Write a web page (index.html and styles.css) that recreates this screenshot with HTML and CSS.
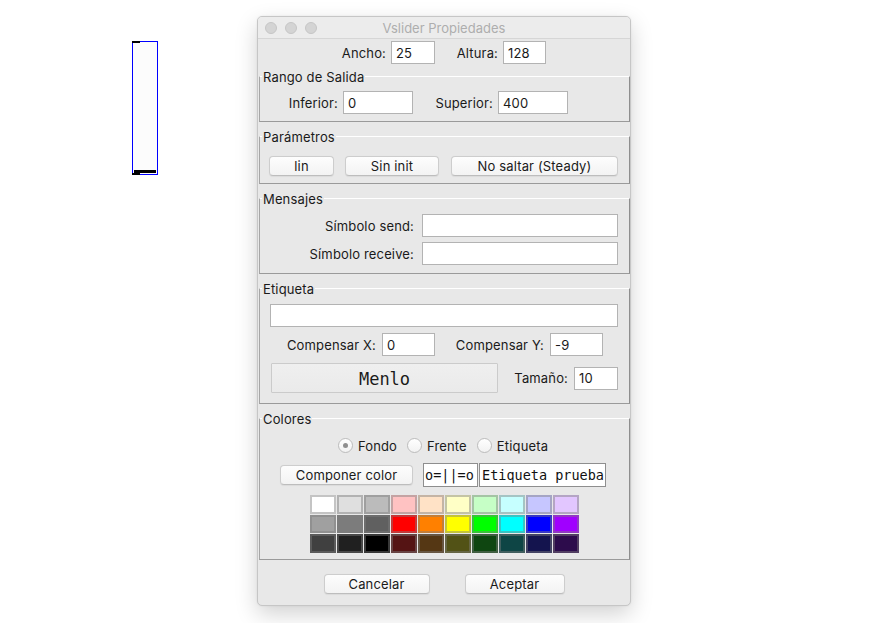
FILE: index.html
```html
<!DOCTYPE html>
<html lang="es">
<head>
<meta charset="utf-8">
<title>Vslider Propiedades</title>
<link rel="stylesheet" href="styles.css">
</head>
<body>
<main class="desktop">
  <div class="vslider">
    <span class="io io-in"></span>
    <span class="knob"></span>
    <span class="io io-out"></span>
  </div>

  <section class="window">
    <header class="titlebar">
      <div class="lights"><span class="light"></span><span class="light"></span><span class="light"></span></div>
      <div class="title">Vslider Propiedades</div>
      <div></div>
    </header>

    <div class="row row-size">
      <label class="lbl lbl-ancho">Ancho:</label>
      <input class="field f-ancho" type="text" value="25">
      <label class="lbl lbl-altura">Altura:</label>
      <input class="field f-altura" type="text" value="128">
    </div>

    <fieldset class="group g-rango">
      <legend>Rango de Salida</legend>
      <div class="row row-rango">
        <label class="lbl lbl-inferior">Inferior:</label>
        <input class="field f-rango" type="text" value="0">
        <label class="lbl lbl-superior">Superior:</label>
        <input class="field f-rango" type="text" value="400">
      </div>
    </fieldset>

    <fieldset class="group g-param">
      <legend>Parámetros</legend>
      <div class="row row-param">
        <button class="btn b-lin">lin</button>
        <button class="btn b-init">Sin init</button>
        <button class="btn b-steady">No saltar (Steady)</button>
      </div>
    </fieldset>

    <fieldset class="group g-msg">
      <legend>Mensajes</legend>
      <div class="row row-msg">
        <label class="lbl lbl-msg">Símbolo send:</label>
        <input class="field f-msg" type="text" value="">
      </div>
      <div class="row row-msg second">
        <label class="lbl lbl-msg">Símbolo receive:</label>
        <input class="field f-msg" type="text" value="">
      </div>
    </fieldset>

    <fieldset class="group g-label">
      <legend>Etiqueta</legend>
      <div class="row">
        <input class="field f-label" type="text" value="">
      </div>
      <div class="row row-offset">
        <label class="lbl lbl-offx">Compensar X:</label>
        <input class="field f-off" type="text" value="0">
        <label class="lbl lbl-offy">Compensar Y:</label>
        <input class="field f-off" type="text" value="-9">
      </div>
      <div class="row row-font">
        <button class="font-btn">Menlo</button>
        <label class="lbl lbl-size">Tamaño:</label>
        <input class="field f-size" type="text" value="10">
      </div>
    </fieldset>

    <fieldset class="group g-colors">
      <legend>Colores</legend>
      <div class="row row-radios">
        <span class="radio"><span class="dot on"><span class="pip"></span></span>Fondo</span>
        <span class="radio"><span class="dot"></span>Frente</span>
        <span class="radio"><span class="dot"></span>Etiqueta</span>
      </div>
      <div class="row row-compose">
        <button class="btn b-compose">Componer color</button>
        <span class="preview p-slider">o=||=o</span>
        <span class="preview p-label">Etiqueta prueba</span>
      </div>
      <div class="palette">
        <span class="swatch" style="--c:#ffffff"></span>
        <span class="swatch" style="--c:#dfdfdf"></span>
        <span class="swatch" style="--c:#bbbbbb"></span>
        <span class="swatch" style="--c:#ffc2c2"></span>
        <span class="swatch" style="--c:#ffe2c6"></span>
        <span class="swatch" style="--c:#ffffc6"></span>
        <span class="swatch" style="--c:#c6ffc6"></span>
        <span class="swatch" style="--c:#c6ffff"></span>
        <span class="swatch" style="--c:#c6c6ff"></span>
        <span class="swatch" style="--c:#e2c6ff"></span>

        <span class="swatch" style="--c:#a0a0a0"></span>
        <span class="swatch" style="--c:#7c7c7c"></span>
        <span class="swatch" style="--c:#606060"></span>
        <span class="swatch" style="--c:#ff0000"></span>
        <span class="swatch" style="--c:#ff8000"></span>
        <span class="swatch" style="--c:#ffff00"></span>
        <span class="swatch" style="--c:#00ff00"></span>
        <span class="swatch" style="--c:#00ffff"></span>
        <span class="swatch" style="--c:#0000ff"></span>
        <span class="swatch" style="--c:#a000ff"></span>

        <span class="swatch" style="--c:#404040"></span>
        <span class="swatch" style="--c:#202020"></span>
        <span class="swatch" style="--c:#000000"></span>
        <span class="swatch" style="--c:#551414"></span>
        <span class="swatch" style="--c:#553714"></span>
        <span class="swatch" style="--c:#525216"></span>
        <span class="swatch" style="--c:#0f4611"></span>
        <span class="swatch" style="--c:#0e4545"></span>
        <span class="swatch" style="--c:#14144e"></span>
        <span class="swatch" style="--c:#2d0c4c"></span>
      </div>
    </fieldset>

    <footer class="actions">
      <button class="btn b-cancel">Cancelar</button>
      <button class="btn b-ok">Aceptar</button>
    </footer>
  </section>
</main>
</body>
</html>
```

FILE: styles.css
```css
* { box-sizing: border-box; }
html, body { margin: 0; padding: 0; background: #ffffff; }
body {
  font-family: Inter, "Liberation Sans", sans-serif;
  font-size: 13px;
  letter-spacing: 0.15px;
  color: #1a1a1a;
}
.desktop { position: relative; width: 884px; height: 623px; overflow: hidden; }

/* Pd vslider object on the canvas */
.vslider {
  position: absolute;
  left: 132px;
  top: 41px;
  width: 26px;
  height: 134px;
  border: 1px solid #0000ff;
  background: #fcfcfc;
}
.io { position: absolute; left: -1px; width: 8px; height: 2px; background: #000; }
.io-in { top: -1px; }
.io-out { bottom: -1px; }
.knob { position: absolute; left: 1px; top: 128px; width: 22px; height: 3px; background: #000; }

/* dialog window */
.window {
  position: absolute;
  left: 257px;
  top: 16px;
  width: 374px;
  height: 590px;
  display: flex;
  flex-direction: column;
  background: #e8e8e8;
  border: 1px solid #c6c6c6;
  border-radius: 5px;
  box-shadow: 0 8px 22px rgba(0, 0, 0, 0.18), 0 0 2px rgba(0, 0, 0, 0.08);
  overflow: hidden;
}
.titlebar {
  flex: none;
  height: 22px;
  display: grid;
  grid-template-columns: 1fr auto 1fr;
  align-items: center;
  padding-top: 1px;
  background: #ececec;
  border-bottom: 1px solid #d6d6d6;
}
.lights { display: flex; gap: 8px; padding-left: 7px; }
.light {
  width: 12px;
  height: 12px;
  border-radius: 50%;
  background: #d4d4d4;
  border: 1px solid #c6c6c6;
}
.title { color: #aeaeae; font-size: 13px; letter-spacing: 0; }

.row { display: flex; align-items: center; }
.lbl { flex: none; text-align: right; white-space: nowrap; }
.field {
  flex: none;
  height: 23px;
  margin: 0;
  padding: 0 4px;
  border: 1px solid #b3b3b3;
  border-radius: 0;
  background: #ffffff;
  font: inherit;
  letter-spacing: inherit;
  color: #1a1a1a;
  outline: none;
}
.btn {
  flex: none;
  height: 20px;
  margin: 0;
  padding: 0;
  font: inherit;
  letter-spacing: inherit;
  color: #1a1a1a;
  background: linear-gradient(#fdfdfd, #f3f3f3);
  border: 1px solid #cdcdcd;
  border-bottom-color: #bdbdbd;
  border-radius: 4px;
  box-shadow: 0 0.5px 1px rgba(0, 0, 0, 0.06);
}

/* size row */
.row-size { margin-top: 2px; padding-left: 78px; }
.lbl-ancho { width: 50px; margin-right: 5px; }
.f-ancho { width: 44px; }
.lbl-altura { width: 43px; margin-left: 20px; margin-right: 5px; }
.f-altura { width: 43px; }

/* titled groups */
.group {
  min-width: 0;
  margin: 6px 0 0 1px;
  padding: 0;
  border: 1px solid #a6a6a6;
  border-top-color: #ffffff;
  border-right-color: #8e8e8e;
  border-bottom-color: #9a9a9a;
}
.group legend {
  margin-left: 2px;
  padding: 1px 1px 0;
  height: 16px;
  line-height: 16px;
  font-size: 13px;
  color: #1a1a1a;
}
.g-rango { margin-top: 4px; padding: 7px 0 7px; }
.g-param { padding: 12px 0 7px; }
.g-msg { padding: 8px 0 8px; }
.g-label { padding: 8px 0 10px; }
.g-colors { padding: 11px 0 6px; }

/* rango */
.row-rango { padding-left: 22px; }
.lbl-inferior { width: 56px; margin-right: 5px; }
.lbl-superior { width: 59px; margin-left: 21px; margin-right: 5px; }
.f-rango { width: 70px; }

/* parametros */
.row-param { padding-left: 9px; }
.b-lin { width: 65px; }
.b-init { width: 94px; margin-left: 11px; }
.b-steady { width: 167px; margin-left: 12px; }

/* mensajes */
.row-msg.second { margin-top: 5px; }
.lbl-msg { width: 154px; margin-right: 8px; }
.f-msg { width: 196px; }

/* etiqueta */
.f-label { width: 348px; margin-left: 10px; }
.row-offset { margin-top: 6px; padding-left: 20px; }
.lbl-offx { width: 96px; margin-right: 6px; }
.lbl-offy { width: 89px; margin-left: 20px; margin-right: 6px; }
.f-off { width: 53px; }
.row-font { margin-top: 7px; padding-left: 11px; }
.font-btn {
  flex: none;
  width: 227px;
  height: 30px;
  margin: 0;
  padding: 2px 0 0;
  background: linear-gradient(#efefef, #eaeaea);
  border: 1px solid #cbcbcb;
  border-radius: 1px;
  font-family: "DejaVu Sans Mono", "Liberation Mono", monospace;
  font-size: 17px;
  letter-spacing: 0;
  color: #1a1a1a;
}
.lbl-size { width: 70px; margin-right: 6px; }
.f-size { width: 44px; }

/* colores */
.row-radios { height: 17px; justify-content: center; gap: 10px; padding-right: 3px; }
.radio { display: inline-flex; align-items: center; gap: 5px; }
.dot {
  width: 15px;
  height: 15px;
  border-radius: 50%;
  border: 1px solid #bcbcbc;
  background: linear-gradient(#ffffff, #f2f2f2);
  display: inline-flex;
  align-items: center;
  justify-content: center;
}
.pip { width: 5px; height: 5px; border-radius: 50%; background: #8f8f8f; }

.row-compose { margin-top: 9px; padding-left: 20px; height: 24px; }
.b-compose { width: 133px; margin-right: 10px; }
.preview {
  flex: none;
  height: 24px;
  display: flex;
  align-items: center;
  background: #ffffff;
  border: 1px solid #8e8e8e;
  font-family: "DejaVu Sans Mono", "Liberation Mono", monospace;
  font-size: 13.5px;
  letter-spacing: 0;
  color: #111;
  white-space: nowrap;
  overflow: hidden;
}
.p-slider { width: 55px; padding-left: 1px; }
.p-label { width: 127px; margin-left: 1px; padding-left: 2px; }

.palette {
  display: grid;
  grid-template-columns: repeat(10, 26px);
  grid-template-rows: repeat(3, 1fr);
  gap: 1px;
  width: 269px;
  height: 58px;
  margin: 8px 0 0 50px;
}
.swatch {
  background: var(--c);
  border: 2px solid color-mix(in srgb, var(--c) 55%, #7c7c7c);
}

/* bottom buttons */
.actions {
  flex: 1;
  display: flex;
  justify-content: center;
  align-items: flex-start;
  gap: 35px;
  padding-top: 14px;
}
.b-cancel { width: 106px; }
.b-ok { width: 100px; }
```
